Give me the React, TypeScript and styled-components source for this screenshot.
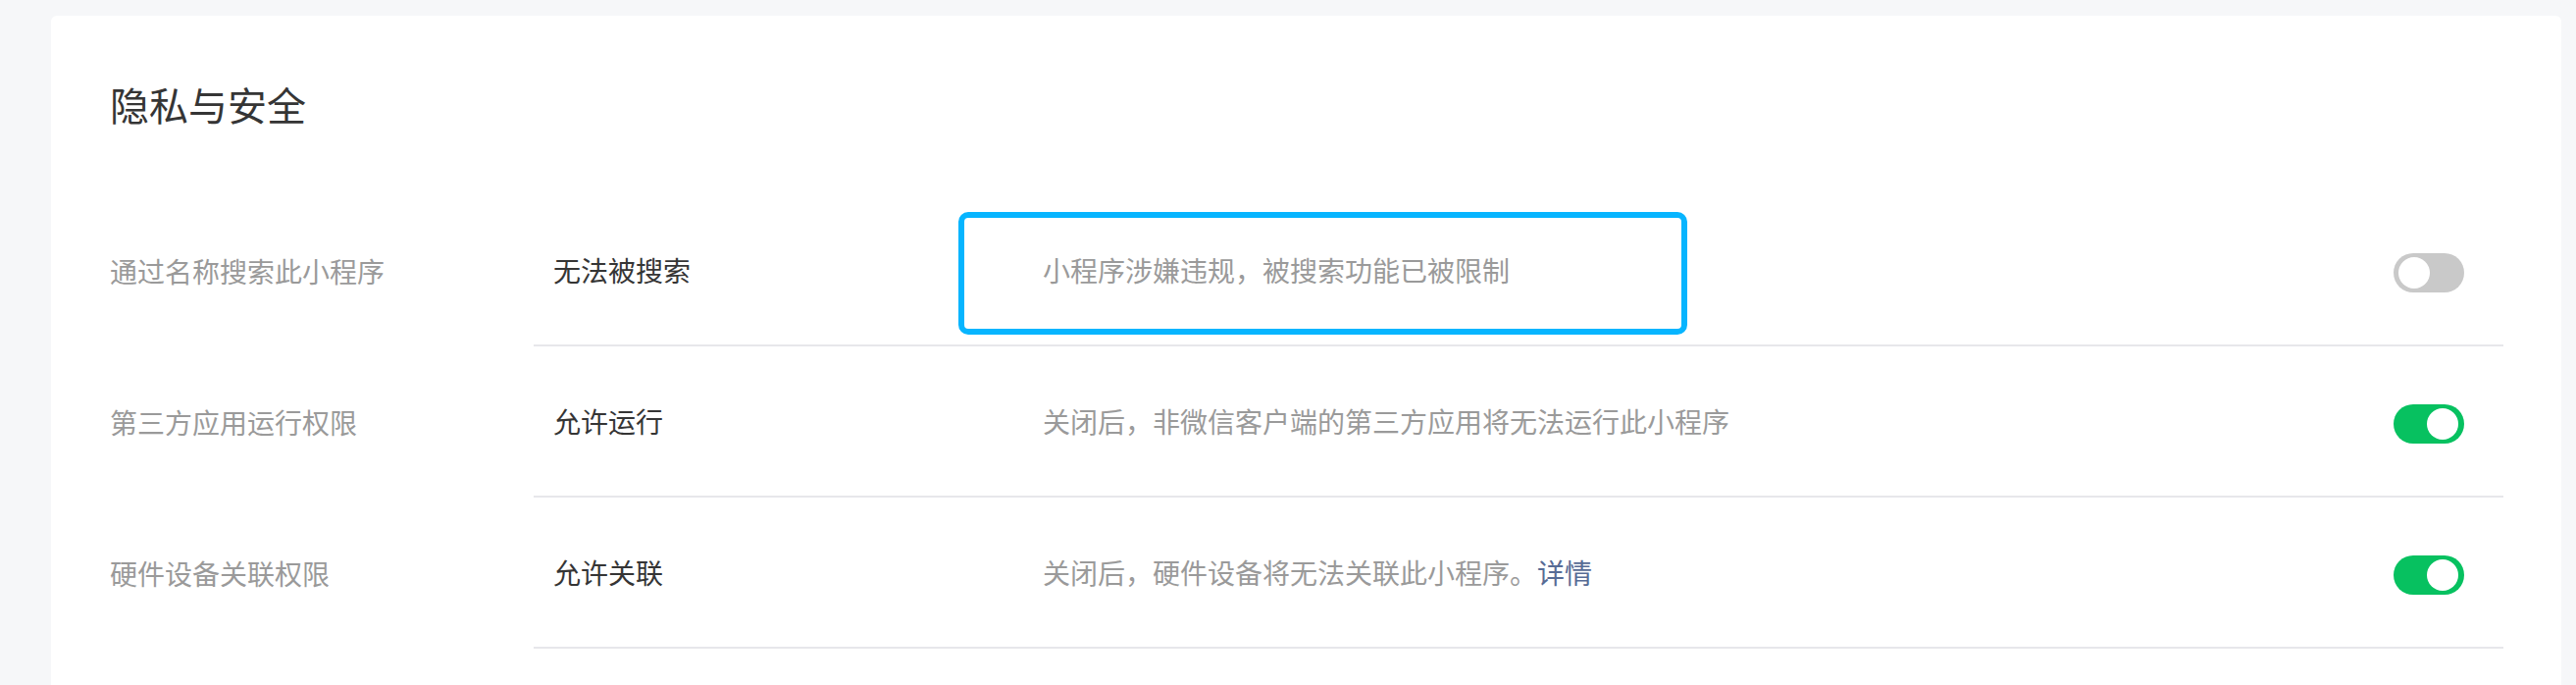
import React from "react";
import styled, { createGlobalStyle } from "styled-components";

const GlobalStyle = createGlobalStyle`
  html, body {
    margin: 0;
    padding: 0;
    background: #f6f7f9;
  }
  body {
    font-family: "Noto Sans CJK SC", "Noto Sans", sans-serif;
    -webkit-font-smoothing: antialiased;
  }
`;

const Page = styled.div`
  height: 698px;
  overflow: hidden;
  padding: 16px 15px 0 52px;
  box-sizing: border-box;
`;

const Card = styled.section`
  background: #fff;
  border-radius: 6px;
  padding: 62px 59px 0 60px;
  min-height: 760px;
  box-sizing: border-box;
`;

const Title = styled.h2`
  margin: 0 0 65px;
  font-size: 40px;
  line-height: 56px;
  font-weight: 400;
  color: #353535;
`;

const Row = styled.div`
  display: flex;
  align-items: center;
`;

const Label = styled.div`
  width: 432px;
  flex: none;
  font-size: 28px;
  color: #9a9a9a;
`;

const Body = styled.div`
  flex: 1;
  display: flex;
  align-items: center;
  height: 152px;
  border-bottom: 2px solid #e7e7eb;
  padding-right: 40px;
`;

const Value = styled.div`
  width: 519px;
  flex: none;
  box-sizing: border-box;
  padding-left: 20px;
  font-size: 28px;
  color: #353535;
`;

const Desc = styled.div`
  flex: 1;
  align-self: stretch;
  display: flex;
  align-items: center;
  position: relative;
  font-size: 28px;
  color: #9a9a9a;
`;

const Highlight = styled.div`
  position: absolute;
  left: -86px;
  top: 17px;
  width: 743px;
  height: 125px;
  box-sizing: border-box;
  border: 6px solid #07b5ff;
  border-radius: 10px;
  pointer-events: none;
`;

const Link = styled.a`
  color: #576b95;
  text-decoration: none;
`;

const Switch = styled.span<{ $on: boolean }>`
  position: relative;
  flex: none;
  width: 72px;
  height: 40px;
  margin-top: 6px;
  border-radius: 20px;
  background: ${(p) => (p.$on ? "#07c160" : "#c9c9c9")};

  &::after {
    content: "";
    position: absolute;
    top: 4px;
    left: ${(p) => (p.$on ? "34px" : "5px")};
    width: 32px;
    height: 32px;
    border-radius: 50%;
    background: #fff;
  }
`;

type Setting = {
  label: string;
  value: string;
  desc: React.ReactNode;
  on: boolean;
  flagged?: boolean;
};

const settings: Setting[] = [
  {
    label: "通过名称搜索此小程序",
    value: "无法被搜索",
    desc: "小程序涉嫌违规，被搜索功能已被限制",
    on: false,
    flagged: true,
  },
  {
    label: "第三方应用运行权限",
    value: "允许运行",
    desc: "关闭后，非微信客户端的第三方应用将无法运行此小程序",
    on: true,
  },
  {
    label: "硬件设备关联权限",
    value: "允许关联",
    desc: (
      <>
        关闭后，硬件设备将无法关联此小程序。<Link href="#">详情</Link>
      </>
    ),
    on: true,
  },
];

const App = () => (
  <Page>
    <GlobalStyle />
    <Card>
      <Title>隐私与安全</Title>
      {settings.map((s, idx) => (
        <Row key={idx}>
          <Label>{s.label}</Label>
          <Body>
            <Value>{s.value}</Value>
            <Desc>
              {s.flagged && <Highlight />}
              <span>{s.desc}</span>
            </Desc>
            <Switch $on={s.on} />
          </Body>
        </Row>
      ))}
    </Card>
  </Page>
);

export default App;
